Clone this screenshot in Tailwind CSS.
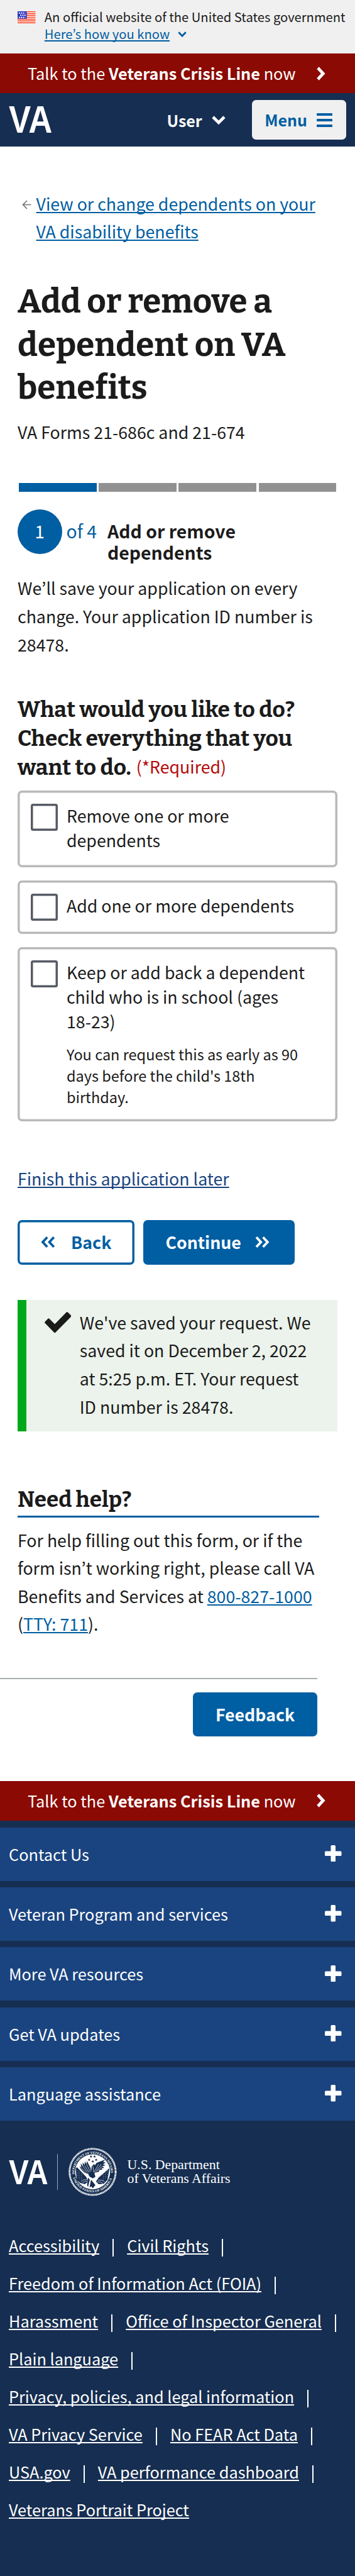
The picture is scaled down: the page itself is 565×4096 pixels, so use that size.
<!DOCTYPE html>
<html lang="en">
<head>
<meta charset="utf-8">
<title>Add or remove a dependent on VA benefits</title>
<script src="https://cdn.jsdelivr.net/npm/@tailwindcss/browser@4"></script>
</head>
<body class="w-[565px] bg-white font-['Noto_Sans_CJK_KR','Noto_Sans_CJK_SC',sans-serif] text-[26.73px] text-[#1b1b1b] whitespace-nowrap overflow-x-hidden [&_a]:underline [&_a]:decoration-[1.5px] [&_a]:underline-offset-[2px] [&_a]:[text-decoration-skip-ink:none]">

<!-- Government banner -->
<div class="flex h-[85px] bg-[#f0f0f0] pt-[13px] pl-[28px] text-[20.2px] leading-[27px]">
  <svg class="mt-[5px] h-[19px] w-[28.5px] shrink-0" viewBox="0 0 39 26" preserveAspectRatio="none">
    <rect width="39" height="26" fill="#fff"/>
    <path d="M0 1H39M0 5H39M0 9H39M0 13H39M0 17H39M0 21H39M0 25H39" stroke="#fa3a17" stroke-width="2"/>
    <rect width="20" height="16" fill="#2b32c0"/>
    <path d="M2.5 3.7H17M5.5 8.6H19M2.5 13.4H17" stroke="#fff" stroke-width="2.6" stroke-dasharray="2.8 1.8"/>
  </svg>
  <div class="ml-[14.3px]">
    <div>An official website of the United States government</div>
    <div class="flex items-start text-[#005ea2]"><a>Here’s how you know</a>
      <svg class="mt-[10px] ml-[12.5px] h-[10px] w-[14px]" viewBox="0 0 14 10" fill="none" stroke="currentColor" stroke-width="2.8"><path d="M1.3 1.3 7 7.3 12.7 1.3"/></svg>
    </div>
  </div>
</div>

<!-- Crisis line -->
<div class="flex h-[63px] items-center bg-[#8b0a03] pl-[44px] text-[25.3px] leading-[63px] text-white">
  <div>Talk to the <b>Veterans Crisis Line</b> now</div>
  <svg class="ml-[33px] h-[22px] w-[14px]" viewBox="0 0 14 22" fill="none" stroke="currentColor" stroke-width="4.8"><path d="M2 2 10.3 11 2 20"/></svg>
</div>

<!-- Header -->
<header class="flex h-[85px] items-center bg-[#162e51] pr-[14px] pl-[14px] text-[25px] font-bold text-white">
  <svg class="h-[42.4px] w-[69.4px] overflow-visible" viewBox="0 0 69.4 42.4" fill="currentColor" font-family="Liberation Sans" font-weight="700" font-size="61.6"><text x="0" y="42.4" textLength="69.4" lengthAdjust="spacingAndGlyphs">VA</text></svg>
  <div class="ml-[182px] flex items-center leading-[84px]">User
    <svg class="ml-[15.5px] h-[14px] w-[22px]" viewBox="0 0 22 14" fill="none" stroke="currentColor" stroke-width="4.6"><path d="M2 2 11 11 20 2"/></svg>
  </div>
  <div class="ml-auto flex h-[63.6px] w-[150.3px] items-center rounded-[6.5px] bg-[#f0f0f0] pl-[20.5px] leading-[63px] text-[#005ea2]">Menu
    <svg class="ml-[15px] h-[22px] w-[25px]" viewBox="0 0 25 22" fill="currentColor"><rect width="25" height="4" rx=".8"/><rect y="9" width="25" height="4" rx=".8"/><rect y="18" width="25" height="4" rx=".8"/></svg>
  </div>
</header>

<main class="pt-[68.8px]">
  <div class="px-[28px]">
    <!-- Breadcrumb -->
    <div class="flex pl-[7px] leading-[44px] text-[#005ea2]">
      <svg class="mt-[16px] h-[15px] w-[15px] text-[#757575]" viewBox="0 0 15 15" fill="none" stroke="currentColor" stroke-width="1.7"><path d="M14.5 7.5H1.5M8 1 1.5 7.5 8 14"/></svg>
      <a class="ml-[7.6px]">View or change dependents on your<br>VA disability benefits</a>
    </div>

    <h1 class="mt-[55.9px] font-[Bitter,'DejaVu_Serif_Condensed',serif] text-[52.9px] leading-[68.85px] font-bold">Add or remove a<br>dependent on VA<br>benefits</h1>
    <p class="mt-[12.8px] leading-[44px]">VA Forms 21-686c and 21-674</p>

    <!-- Progress -->
    <div class="mx-[1.9px] mt-[58.9px] grid h-[14px] grid-cols-4 gap-[3.6px]">
      <div class="bg-[#005ea2]"></div><div class="bg-[#919191]"></div><div class="bg-[#919191]"></div><div class="bg-[#919191]"></div>
    </div>
    <div class="mt-[28.5px] flex h-[85.7px] text-[28.4px] leading-[34.7px]">
      <div class="h-[70.5px] w-[70.5px] rounded-full bg-[#005ea2] pt-[16.3px] text-center text-white">1</div>
      <div class="w-[72.5px] pt-[16.3px] pl-[7px] text-[#005ea2]">of 4</div>
      <div class="pt-[16.3px] font-bold">Add or remove<br>dependents</div>
    </div>
    <p class="mt-[15.7px] leading-[45px]">We’ll save your application on every<br>change. Your application ID number is<br>28478.</p>

    <h2 class="mt-[58.6px] font-[Bitter,'DejaVu_Serif_Condensed',serif] text-[35.25px] leading-[46px] font-bold">What would you like to do?<br>Check everything that you<br><span class="flex">want to do.<span class="ml-[8px] -mt-[2px] pt-[1px] font-['Noto_Sans_CJK_KR',sans-serif] text-[26.7px] font-normal text-[#b50909]">(*Required)</span></span></h2>

    <!-- Options -->
    <div class="mt-[13.5px] flex h-[122px] rounded-[7px] pt-[21.3px] pl-[21.3px] leading-[39px] shadow-[inset_0_0_0_3.5px_#b9b9b9]">
      <div class="h-[42.4px] w-[42.4px] shrink-0 rounded-[3.5px] shadow-[inset_0_0_0_3.5px_#565c65]"></div>
      <div class="-mt-[1.5px] ml-[14.3px]">Remove one or more<br>dependents</div>
    </div>
    <div class="mt-[21px] flex h-[85px] rounded-[7px] pt-[21.3px] pl-[21.3px] leading-[39px] shadow-[inset_0_0_0_3.5px_#b9b9b9]">
      <div class="h-[42.4px] w-[42.4px] shrink-0 rounded-[3.5px] shadow-[inset_0_0_0_3.5px_#565c65]"></div>
      <div class="-mt-[1.5px] ml-[14.3px]">Add one or more dependents</div>
    </div>
    <div class="mt-[21px] flex h-[277px] rounded-[7px] pt-[21.3px] pl-[21.3px] leading-[39px] shadow-[inset_0_0_0_3.5px_#b9b9b9]">
      <div class="h-[42.4px] w-[42.4px] shrink-0 rounded-[3.5px] shadow-[inset_0_0_0_3.5px_#565c65]"></div>
      <div class="-mt-[1.3px] ml-[14.3px]">Keep or add back a dependent<br>child who is in school (ages<br>18-23)
        <p class="mt-[15.7px] text-[23.5px] leading-[34.4px]">You can request this as early as 90<br>days before the child's 18th<br>birthday.</p>
      </div>
    </div>

    <div class="mt-[69px] leading-[44px] text-[#1a4480]"><a>Finish this application later</a></div>

    <!-- Navigation buttons -->
    <div class="mt-[44.3px] flex h-[70.6px] gap-[14px] leading-[70px] font-bold">
      <div class="flex w-[185.6px] items-center rounded-[7px] pl-[36.5px] text-[#005ea2] shadow-[inset_0_0_0_3.5px_#005ea2]">
        <svg class="h-[18px] w-[23px]" viewBox="0 0 23 18" fill="none" stroke="currentColor" stroke-width="3.8"><path d="M10.2 1.3 3 9 10.2 16.7M20.8 1.3 13.6 9 20.8 16.7"/></svg>
        <span class="ml-[25.6px]">Back</span>
      </div>
      <div class="flex w-[241.8px] items-center rounded-[7px] bg-[#005ea2] pl-[35.8px] text-white">Continue
        <svg class="ml-[22.5px] h-[18px] w-[23px]" viewBox="0 0 23 18" fill="none" stroke="currentColor" stroke-width="3.8"><path d="M2 1.3 9.2 9 2 16.7M12.6 1.3 19.8 9 12.6 16.7"/></svg>
      </div>
    </div>

    <!-- Saved alert -->
    <div class="mt-[56.4px] flex h-[208.5px] bg-[#ecf3ec] leading-[44.9px]">
      <div class="w-[14.3px] bg-[#00a91c]"></div>
      <svg class="mt-[19.2px] ml-[28.3px] h-[33.3px] w-[42.5px]" viewBox="0 0 42.5 33.3" fill="#1b1b1b" stroke="#1b1b1b" stroke-width="3" stroke-linejoin="round"><path d="M1.6 16.8 6.4 11.9 16.2 21.5 35.8 1.6 41 6.6 16.2 31.7Z"/></svg>
      <p class="ml-[13.7px] pt-[13.4px]">We've saved your request. We<br>saved it on December 2, 2022<br>at 5:25 p.m. ET. Your request<br>ID number is 28478.</p>
    </div>

    <!-- Help -->
    <h2 class="mt-[85.3px] font-[Bitter,'DejaVu_Serif_Condensed',serif] text-[35px] leading-[46px] font-bold">Need help?</h2>
    <div class="mt-[2.9px] h-[3.4px] w-[480.4px] bg-[#005ea2]"></div>
    <p class="mt-[13.7px] leading-[44.4px]">For help filling out this form, or if the<br>form isn’t working right, please call VA<br>Benefits and Services at <a class="text-[#005ea2]">800-827-1000</a><br>(<a class="text-[#005ea2]">TTY: 711</a>).</p>
  </div>

  <!-- Feedback -->
  <div class="mt-[63px] flex w-[504.8px] flex-col items-end">
    <div class="h-[2px] w-full bg-[#a9aeb1]"></div>
    <div class="mt-[21px] h-[70.6px] w-[197.5px] rounded-[7px] bg-[#005ea2] text-center leading-[70px] font-bold text-white">Feedback</div>
  </div>
</main>

<footer class="mt-[70.4px] h-[1264.5px] bg-[#162e51] text-[25.3px] text-white">
  <div class="flex h-[63.8px] items-center bg-[#8b0a03] pl-[44px] leading-[63px]">
    <div>Talk to the <b>Veterans Crisis Line</b> now</div>
    <svg class="ml-[33px] h-[22px] w-[14px]" viewBox="0 0 14 22" fill="none" stroke="currentColor" stroke-width="4.8"><path d="M2 2 10.3 11 2 20"/></svg>
  </div>
  <div class="flex flex-col gap-[10.65px] pt-[10.5px] leading-[84.7px] *:flex *:h-[84.7px] *:items-center *:justify-between *:bg-[#1a4480] *:pr-[21.3px] *:pl-[14px] [&_svg]:-mt-[2px] [&_svg]:h-[26.5px] [&_svg]:w-[26.5px]">
    <div>Contact Us<svg viewBox="0 0 26.5 26.5" fill="currentColor"><rect x="9.5" width="7.5" height="26.5" rx="1.6"/><rect y="9.5" width="26.5" height="7.5" rx="1.6"/></svg></div>
    <div>Veteran Program and services<svg viewBox="0 0 26.5 26.5" fill="currentColor"><rect x="9.5" width="7.5" height="26.5" rx="1.6"/><rect y="9.5" width="26.5" height="7.5" rx="1.6"/></svg></div>
    <div>More VA resources<svg viewBox="0 0 26.5 26.5" fill="currentColor"><rect x="9.5" width="7.5" height="26.5" rx="1.6"/><rect y="9.5" width="26.5" height="7.5" rx="1.6"/></svg></div>
    <div>Get VA updates<svg viewBox="0 0 26.5 26.5" fill="currentColor"><rect x="9.5" width="7.5" height="26.5" rx="1.6"/><rect y="9.5" width="26.5" height="7.5" rx="1.6"/></svg></div>
    <div>Language assistance<svg viewBox="0 0 26.5 26.5" fill="currentColor"><rect x="9.5" width="7.5" height="26.5" rx="1.6"/><rect y="9.5" width="26.5" height="7.5" rx="1.6"/></svg></div>
  </div>

  <!-- Department logo -->
  <div class="mt-[43.2px] flex h-[76.8px] items-center pl-[14px]">
    <svg class="h-[38.6px] w-[62.8px] overflow-visible" viewBox="0 0 69.4 42.4" preserveAspectRatio="none" fill="currentColor" font-family="Liberation Sans" font-weight="700" font-size="61.6"><text x="0" y="42.4" textLength="69.4" lengthAdjust="spacingAndGlyphs">VA</text></svg>
    <div class="ml-[14.5px] h-[56.6px] w-px bg-white/60"></div>
    <svg class="ml-[17px] h-[76.8px] w-[76.8px]" viewBox="17 26 392 392">
      <circle cx="213" cy="222" r="187" fill="none" stroke="#fff" stroke-width="15" stroke-dasharray="9 3.4"/>
      <circle cx="213" cy="222" r="142" fill="#fff"/>
      <path id="arcTop" d="M66 240A148 148 0 1 1 360 240" fill="none"/>
      <path id="arcBottom" d="M54 270A166 166 0 0 0 372 270" fill="none"/>
      <g fill="#fff" font-family="Liberation Serif" font-weight="700" font-size="26">
        <text><textPath href="#arcTop" textLength="490" lengthAdjust="spacingAndGlyphs">DEPARTMENT OF VETERANS AFFAIRS</textPath></text>
        <text><textPath href="#arcBottom" textLength="420" lengthAdjust="spacingAndGlyphs">UNITED STATES OF AMERICA</textPath></text>
      </g>
      <g fill="#162e51">
        <path id="star" d="M200 86l3 8h9l-7 5 3 9-8-5-8 5 3-9-7-5h9z"/>
        <use href="#star" x="29"/><use href="#star" x="-15" y="27"/><use href="#star" x="42" y="27"/><use href="#star" x="14" y="39"/>
        <path d="M204 240 196 190 166 133 164 160 150 138 148 166 132 145 134 176 115 152 122 188 106 174 118 202 104 196 132 222 170 238Z"/>
        <path d="M212 232 226 176 246 148 316 122 298 142 320 146 296 160 318 168 292 176 308 190 284 192 294 204 270 206 262 222Z"/>
        <path d="M205 180 225 158 240 185 228 235 236 262 215 275 190 262 176 240 200 232Z"/>
        <path d="M76 192 88 186 160 262 178 300 150 322 112 312 84 288Z"/>
        <path d="M350 192 262 268 240 300 262 322 304 318 334 286Z"/>
        <path d="M176 268 190 285 176 345 168 330ZM200 285 212 300 236 330 214 355 202 340 188 350Z"/>
      </g>
      <g fill="none" stroke="#fff" stroke-width="3.5">
        <path d="M194 222 164 160M184 226 148 170M172 228 132 174M160 228 120 190M226 222 262 160M236 224 284 158M248 218 292 176M216 178 222 226"/>
        <path d="M118 300Q140 280 168 286M130 312Q150 294 174 298M310 302Q290 284 256 290M296 314Q276 298 250 304"/>
        <path d="M86 172 178 268M346 182 238 278" stroke-width="9"/>
        <path d="M94 210v70M108 222v68M124 238v54M300 244v46M316 228v52M332 214v50" stroke-dasharray="4 10"/>
        <path d="M150 240 176 246" stroke-width="16"/>
      </g>
    </svg>
    <div class="ml-[16.5px] pt-[1px] font-['Liberation_Serif',serif] text-[21.8px] leading-[21.8px]">U.S. Department<br>of Veterans Affairs</div>
  </div>

  <!-- Footer links -->
  <div class="mt-[48.4px] pl-[14px] leading-[60px] [&_i]:mx-[21.3px] [&_i]:mt-[7.6px] [&_i]:h-[28.4px] [&_i]:w-[1.5px] [&_i]:bg-white *:flex *:h-[60px] *:items-center">
    <div><a>Accessibility</a><i></i><a>Civil Rights</a><i></i></div>
    <div><a>Freedom of Information Act (FOIA)</a><i></i></div>
    <div><a>Harassment</a><i></i><a>Office of Inspector General</a><i></i></div>
    <div><a>Plain language</a><i></i></div>
    <div><a>Privacy, policies, and legal information</a><i></i></div>
    <div><a>VA Privacy Service</a><i></i><a>No FEAR Act Data</a><i></i></div>
    <div><a>USA.gov</a><i></i><a>VA performance dashboard</a><i></i></div>
    <div><a>Veterans Portrait Project</a></div>
  </div>
</footer>
</body>
</html>
